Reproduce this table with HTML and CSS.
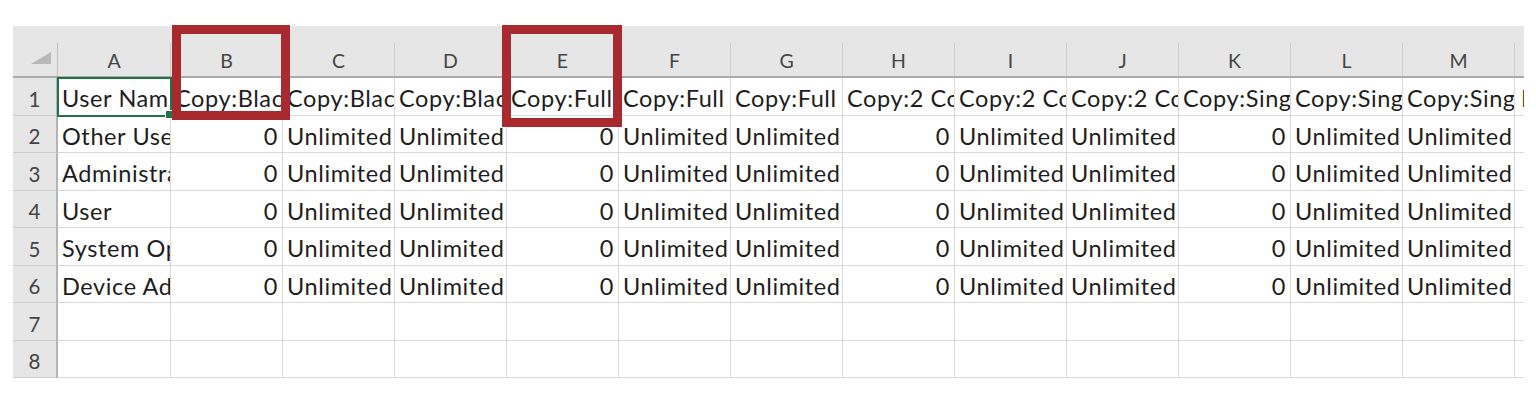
FILE: index.html
```html
<!DOCTYPE html>
<html lang="en">
<head>
<meta charset="utf-8">
<title>Sheet</title>
<link rel="stylesheet" href="styles.css">
</head>
<body>
<div class="sheet">
  <div class="grid colhead">
    <div class="ch corner"><svg class="tri" width="20" height="12" viewBox="0 0 20 12"><polygon points="20,0 20,12 0,12" fill="#b9b9b9"/></svg></div>
    <div class="ch">A</div><div class="ch">B</div><div class="ch">C</div><div class="ch">D</div><div class="ch">E</div><div class="ch">F</div><div class="ch">G</div><div class="ch">H</div><div class="ch">I</div><div class="ch">J</div><div class="ch">K</div><div class="ch">L</div><div class="ch">M</div><div class="ch last"></div>
  </div>
  <div class="grid row">
    <div class="rh">1</div>
    <div class="c sel"><span class="txt">User Name</span><span class="handle"></span></div>
    <div class="c">Copy:Black</div><div class="c">Copy:Black</div><div class="c">Copy:Black</div>
    <div class="c">Copy:Full</div><div class="c">Copy:Full</div><div class="c">Copy:Full</div>
    <div class="c">Copy:2 Color</div><div class="c">Copy:2 Color</div><div class="c">Copy:2 Color</div>
    <div class="c">Copy:Single</div><div class="c">Copy:Single</div><div class="c">Copy:Single</div>
    <div class="c last">Print</div>
  </div>
  <div class="grid row">
    <div class="rh">2</div><div class="c">Other User</div>
    <div class="c num">0</div><div class="c">Unlimited</div><div class="c">Unlimited</div>
    <div class="c num">0</div><div class="c">Unlimited</div><div class="c">Unlimited</div>
    <div class="c num">0</div><div class="c">Unlimited</div><div class="c">Unlimited</div>
    <div class="c num">0</div><div class="c">Unlimited</div><div class="c">Unlimited</div>
    <div class="c last"></div>
  </div>
  <div class="grid row">
    <div class="rh">3</div><div class="c">Administrator</div>
    <div class="c num">0</div><div class="c">Unlimited</div><div class="c">Unlimited</div>
    <div class="c num">0</div><div class="c">Unlimited</div><div class="c">Unlimited</div>
    <div class="c num">0</div><div class="c">Unlimited</div><div class="c">Unlimited</div>
    <div class="c num">0</div><div class="c">Unlimited</div><div class="c">Unlimited</div>
    <div class="c last"></div>
  </div>
  <div class="grid row">
    <div class="rh">4</div><div class="c">User</div>
    <div class="c num">0</div><div class="c">Unlimited</div><div class="c">Unlimited</div>
    <div class="c num">0</div><div class="c">Unlimited</div><div class="c">Unlimited</div>
    <div class="c num">0</div><div class="c">Unlimited</div><div class="c">Unlimited</div>
    <div class="c num">0</div><div class="c">Unlimited</div><div class="c">Unlimited</div>
    <div class="c last"></div>
  </div>
  <div class="grid row">
    <div class="rh">5</div><div class="c">System Operator</div>
    <div class="c num">0</div><div class="c">Unlimited</div><div class="c">Unlimited</div>
    <div class="c num">0</div><div class="c">Unlimited</div><div class="c">Unlimited</div>
    <div class="c num">0</div><div class="c">Unlimited</div><div class="c">Unlimited</div>
    <div class="c num">0</div><div class="c">Unlimited</div><div class="c">Unlimited</div>
    <div class="c last"></div>
  </div>
  <div class="grid row">
    <div class="rh">6</div><div class="c">Device Administrator</div>
    <div class="c num">0</div><div class="c">Unlimited</div><div class="c">Unlimited</div>
    <div class="c num">0</div><div class="c">Unlimited</div><div class="c">Unlimited</div>
    <div class="c num">0</div><div class="c">Unlimited</div><div class="c">Unlimited</div>
    <div class="c num">0</div><div class="c">Unlimited</div><div class="c">Unlimited</div>
    <div class="c last"></div>
  </div>
  <div class="grid row">
    <div class="rh">7</div>
    <div class="c"></div><div class="c"></div><div class="c"></div><div class="c"></div><div class="c"></div><div class="c"></div><div class="c"></div><div class="c"></div><div class="c"></div><div class="c"></div><div class="c"></div><div class="c"></div><div class="c"></div>
    <div class="c last"></div>
  </div>
  <div class="grid row">
    <div class="rh">8</div>
    <div class="c"></div><div class="c"></div><div class="c"></div><div class="c"></div><div class="c"></div><div class="c"></div><div class="c"></div><div class="c"></div><div class="c"></div><div class="c"></div><div class="c"></div><div class="c"></div><div class="c"></div>
    <div class="c last"></div>
  </div>
  <div class="anno anno-b"></div>
  <div class="anno anno-e"></div>
</div>
</body>
</html>
```
FILE: styles.css
```css
html, body {
  margin: 0;
  padding: 0;
  background: #ffffff;
}
body {
  font-family: Lato, "Liberation Sans", sans-serif;
}
.sheet {
  position: relative;
  width: 1511px;
  margin: 26px 0 0 13px;
}
.grid {
  display: grid;
  grid-template-columns: 45px 113px repeat(12, 112px) 9px;
}
.colhead {
  height: 52px;
  background: #e6e6e6;
  align-items: end;
  border-bottom: 2px solid #ababab;
  box-sizing: border-box;
}
.ch {
  height: 33px;
  border-right: 1px solid #cbcbcb;
  box-sizing: border-box;
  display: flex;
  align-items: center;
  justify-content: center;
  font-size: 19.5px;
  color: #444444;
  padding-top: 2px;
}
.ch.last {
  border-right: none;
}
.corner {
  position: relative;
  border-right: 1px solid #bdbdbd;
  justify-content: flex-end;
  align-items: flex-start;
  padding: 9px 6px 0 0;
}
.tri {
  display: block;
}
.row {
  height: 37.5px;
}
.rh {
  background: #e6e6e6;
  border-right: 2px solid #b4b4b4;
  border-bottom: 1px solid #cdcdcd;
  box-sizing: border-box;
  display: flex;
  align-items: center;
  justify-content: center;
  font-size: 20.5px;
  color: #444444;
  padding-top: 5px;
}
.c {
  position: relative;
  border-right: 1px solid #d9d9d9;
  border-bottom: 1px solid #d9d9d9;
  box-sizing: border-box;
  overflow: hidden;
  white-space: nowrap;
  font-size: 23.5px;
  letter-spacing: 0.6px;
  line-height: 1;
  color: #1e1e1e;
  padding: 0 2px 4px 4px;
  display: flex;
  align-items: flex-end;
}
.c.num {
  justify-content: flex-end;
  padding-right: 4px;
}
.c.last {
  border-right: none;
  padding-left: 6px;
}
.c.sel {
  overflow: visible;
  outline: 2px solid #217346;
  outline-offset: -1px;
  z-index: 2;
}
.txt {
  display: block;
  overflow: hidden;
  width: 100%;
}
.handle {
  position: absolute;
  right: -4px;
  bottom: -4px;
  width: 7px;
  height: 7px;
  background: #217346;
  border: 1px solid #ffffff;
}
.anno {
  position: absolute;
  border: 9px solid #a8292e;
  box-sizing: border-box;
  z-index: 5;
}
.anno-b {
  left: 159px;
  top: -1px;
  width: 118px;
  height: 95px;
}
.anno-e {
  left: 489px;
  top: -1px;
  width: 120px;
  height: 102px;
}
```
